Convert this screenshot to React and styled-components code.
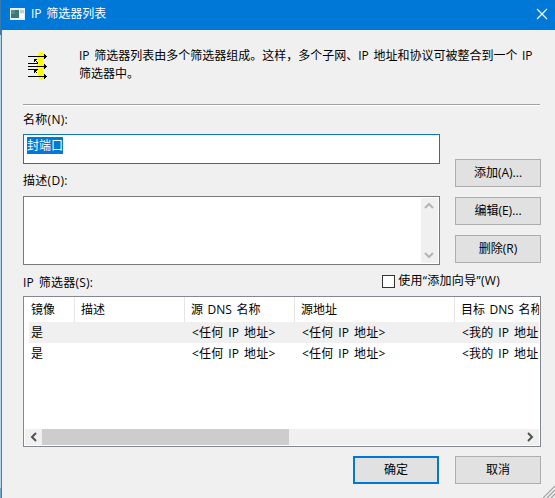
import React from 'react';
import styled, {createGlobalStyle} from 'styled-components';

const columns = [
	{title: '镜像', width: 50},
	{title: '描述', width: 110},
	{title: '源 DNS 名称', width: 110},
	{title: '源地址', width: 160},
	{title: '目标 DNS 名称', width: 120},
];

const filters = [
	['是', '', '<任何 IP 地址>', '<任何 IP 地址>', '<我的 IP 地址>'],
	['是', '', '<任何 IP 地址>', '<任何 IP 地址>', '<我的 IP 地址>'],
];

const Chevron = ({d, color = '#505050', size = 16, weight = 2}) => (
	<svg width={size} height={size} viewBox="0 0 16 16" fill="none" stroke={color} strokeWidth={weight}>
		<path d={d}/>
	</svg>
);

const WindowIcon = () => (
	<svg width="15" height="12" viewBox="0 0 15 12" shapeRendering="crispEdges">
		<rect width="15" height="12" fill="#e9eeee"/>
		<rect x="1" y="2" width="8" height="8" fill="#397b78"/>
		<rect x="1" y="2" width="4" height="4" fill="#55918b"/>
		<rect x="10" y="2" width="4" height="3" fill="#c4cccc"/>
		<rect x="10" y="6" width="4" height="4" fill="#f8f8f8"/>
	</svg>
);

const FilterIcon = () => (
	<svg width="20" height="28" viewBox="0 0 20 28" shapeRendering="crispEdges">
		<path d="M11 0h4v2h1v24h-1v2h-4v-2h-1v-8H9v-8h1V2h1z" fill="#ffff00"/>
		<path d="M0 4h17M0 11h10M0 14h17M0 17h10M0 24h17" stroke="#000" transform="translate(0 .5)"/>
		<path d="M16 2h1v1h1v1h1v1h-1v1h-1v1h-1zM16 12h1v1h1v1h1v1h-1v1h-1v1h-1zM16 22h1v1h1v1h1v1h-1v1h-1v1h-1z"/>
		<path d="M6 7h3v1H8v1h1v1H8V9H7v1H6zM6 18h3v1H8v1h1v1H8v-1H7v1H6zM9 10h1v1H9zM9 17h1v1H9z"/>
	</svg>
);

const App = () => (
	<Screen>
		<GlobalStyle/>
		<Backdrop/>
		<Dialog>
			<TitleBar>
				<WindowIcon/>
				<Title>IP 筛选器列表</Title>
				<CloseButton aria-label="关闭">
					<svg width="12" height="12" viewBox="0 0 12 12" stroke="#fff" strokeWidth="1.2">
						<path d="M1 1l10 10M11 1L1 11"/>
					</svg>
				</CloseButton>
			</TitleBar>
			<Content>
				<Intro>
					<FilterIcon/>
					<IntroText>IP 筛选器列表由多个筛选器组成。这样，多个子网、IP 地址和协议可被整合到一个 IP<br/>筛选器中。</IntroText>
				</Intro>
				<Divider/>
				<Form>
					<Fields>
						<Label $height={29}>名称(N):</Label>
						<NameField><Selected>封端口</Selected></NameField>
						<Label $height={32} $drop={2}>描述(D):</Label>
						<Description>
							<VerticalScroll>
								<Chevron d="M4 10l4-4 4 4" color="#b5b5b5"/>
								<Chevron d="M4 6l4 4 4-4" color="#b5b5b5"/>
							</VerticalScroll>
						</Description>
					</Fields>
					<Actions>
						<Button>添加(A)...</Button>
						<Button>编辑(E)...</Button>
						<Button>删除(R)</Button>
					</Actions>
				</Form>
				<ListHeading>
					<span>IP 筛选器(S):</span>
					<Wizard><Checkbox/>使用“添加向导”(W)</Wizard>
				</ListHeading>
				<List>
					<HeaderRow>
						{columns.map(({title, width}) => (
							<HeaderCell key={title} $width={width}>{title}</HeaderCell>
						))}
					</HeaderRow>
					{filters.map((cells, index) => (
						<Row key={index} $active={index === 0}>
							{cells.map((text, i) => (
								<Cell key={i} $width={columns[i].width} $indent={i > 0}>{text}</Cell>
							))}
						</Row>
					))}
					<HorizontalScroll>
						<Chevron d="M11 4L7 8l4 4"/>
						<Thumb/>
						<Chevron d="M5 4l4 4-4 4"/>
					</HorizontalScroll>
				</List>
				<Footer>
					<Button $primary>确定</Button>
					<Button>取消</Button>
				</Footer>
			</Content>
			<Grip width="12" height="12" viewBox="0 0 12 12" stroke="#a0a0a0" strokeWidth="1.2">
				<path d="M0 12L12 0M4 12l8-8M8 12l4-4"/>
			</Grip>
		</Dialog>
	</Screen>
);

export default App;

const GlobalStyle = createGlobalStyle`
	body {
		margin: 0;
		overflow: hidden;
		font: 12px/18px "Open Sans", "Noto Sans CJK SC", sans-serif;
		word-spacing: 1.5px;
		color: #000;
	}

	* {
		box-sizing: border-box;
	}

	svg {
		display: block;
		flex-shrink: 0;
	}
`;

const Screen = styled.div`
	display: flex;
	width: 555px;
	height: 498px;
	overflow: hidden;
	white-space: nowrap;
`;

const Backdrop = styled.div`
	width: 1px;
	background: linear-gradient(#3b79a8 0 35px, #b4daf2 35px 488px, #6fa6cf 488px);
`;

const Dialog = styled.div`
	position: relative;
	width: 554px;
	background: #f0f0f0;
`;

const TitleBar = styled.div`
	height: 30px;
	display: flex;
	align-items: center;
	padding: 0 7px 2px 9px;
	background: #0078d7;
	color: #fff;
`;

const Title = styled.div`
	flex: 1;
	margin-left: 6px;
`;

const CloseButton = styled.button`
	padding: 0;
	border: 0;
	background: none;
`;

const Content = styled.div`
	height: 468px;
	padding: 0 14px 0 21px;
	border-left: 1px solid #3b82b5;
`;

const Intro = styled.div`
	height: 74px;
	display: flex;
	align-items: flex-start;
	padding: 22px 0 0 5px;
`;

const IntroText = styled.div`
	margin: -5px 0 0 31px;
`;

const Divider = styled.div`
	height: 2px;
	margin-right: 1px;
	background: #fff;
	border-top: 1px solid #a0a0a0;
`;

const Form = styled.div`
	display: flex;
	justify-content: space-between;
`;

const Fields = styled.div`
	width: 417px;
	margin-top: -1px;
`;

const Label = styled.div`
	height: ${({$height}) => $height}px;
	display: flex;
	align-items: center;
	padding-top: ${({$drop = 0}) => $drop}px;
	letter-spacing: 0.3px;
`;

const NameField = styled.div`
	height: 30px;
	padding: 2px 3px;
	background: #fff;
	border: 1px solid #0f79b3;
`;

const Selected = styled.div`
	width: fit-content;
	height: 17px;
	line-height: 17px;
	background: #0078d7;
	color: #fff;
`;

const Description = styled.div`
	height: 69px;
	display: flex;
	justify-content: flex-end;
	padding: 1px;
	background: #fff;
	border: 1px solid #7a7a7a;
`;

const VerticalScroll = styled.div`
	width: 17px;
	display: flex;
	flex-direction: column;
	justify-content: space-between;
	background: #f0f0f0;
`;

const Actions = styled.div`
	display: flex;
	flex-direction: column;
	gap: 10px;
	padding-top: 53px;
`;

const Button = styled.button`
	width: 86px;
	height: 28px;
	padding: 0;
	font: inherit;
	color: #000;
	background: #e1e1e1;
	border: ${({$primary}) => ($primary ? '2px solid #0078d7' : '1px solid #adadad')};
`;

const ListHeading = styled.div`
	height: 31px;
	display: flex;
	justify-content: space-between;
	align-items: center;
	padding: 5px 41px 0 0;
	letter-spacing: 0.2px;
`;

const Wizard = styled.label`
	display: flex;
	align-items: center;
	margin-top: -4px;
	letter-spacing: 0.3px;
`;

const Checkbox = styled.span`
	width: 13px;
	height: 13px;
	margin-right: 3px;
	background: #fff;
	border: 1px solid #333;
`;

const List = styled.div`
	height: 151px;
	display: flex;
	flex-direction: column;
	padding: 0 1px;
	overflow: hidden;
	background: #fff;
	border: 1px solid #828790;
`;

const HeaderRow = styled.div`
	height: 25px;
	display: flex;
	overflow: hidden;
`;

const HeaderCell = styled.div`
	flex: none;
	width: ${({$width}) => $width}px;
	padding-left: 6px;
	line-height: 25px;
	border-right: 1px solid #e5e5e5;
`;

const Row = styled.div`
	height: 21px;
	margin-left: 4px;
	display: flex;
	overflow: hidden;
	background: ${({$active}) => ($active ? '#f0f0f0' : '#fff')};
`;

const Cell = styled.div`
	flex: none;
	width: ${({$width}) => $width}px;
	padding-left: ${({$indent}) => ($indent ? 3 : 2)}px;
	line-height: 21px;
	letter-spacing: ${({$indent}) => ($indent ? 0.2 : 0)}px;
`;

const HorizontalScroll = styled.div`
	height: 16px;
	margin: auto 0 1px;
	display: flex;
	justify-content: space-between;
	background: #f0f0f0;
`;

const Thumb = styled.div`
	width: 247px;
	margin: 0 auto 0 1px;
	background: #cdcdcd;
`;

const Footer = styled.div`
	display: flex;
	justify-content: flex-end;
	gap: 16px;
	margin-top: 9px;
`;

/* sits over the bottom right corner of the window */
const Grip = styled.svg`
	position: absolute;
	right: 0;
	bottom: 0;
`;
